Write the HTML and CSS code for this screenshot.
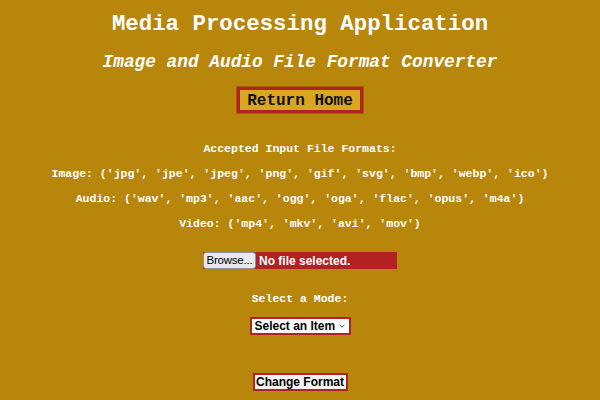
FILE: index.html
```html
<!DOCTYPE html>
<html>
<head>
<meta charset="utf-8">
<link rel="stylesheet" href="styles.css">
</head>
<body>
<main class="page">
  <h1 class="title">Media Processing Application</h1>
  <h2 class="subtitle">Image and Audio File Format Converter</h2>
  <button class="home-btn">Return Home</button>
  <section class="formats">
    <p>Accepted Input File Formats:</p>
    <p>Image: ('jpg', 'jpe', 'jpeg', 'png', 'gif', 'svg', 'bmp', 'webp', 'ico')</p>
    <p>Audio: ('wav', 'mp3', 'aac', 'ogg', 'oga', 'flac', 'opus', 'm4a')</p>
    <p>Video: ('mp4', 'mkv', 'avi', 'mov')</p>
  </section>
  <div class="file-input">
    <span class="browse">Browse...</span><span class="file-status">No file selected.</span>
  </div>
  <p class="mode-label">Select a Mode:</p>
  <div class="select">
    <span>Select an Item</span>
    <svg class="chev" width="6" height="4" viewBox="0 0 6 4"><path d="M0.5 0.8 L3 3.2 L5.5 0.8" fill="none" stroke="#444" stroke-width="1"/></svg>
  </div>
  <button class="change-btn">Change Format</button>
</main>
</body>
</html>
```
FILE: styles.css
```css
html, body {
  margin: 0;
  padding: 0;
  background: #b8860b;
}
.page {
  display: flex;
  flex-direction: column;
  align-items: center;
  font-family: "Liberation Mono", "Courier New", monospace;
  font-weight: bold;
  color: #fff;
  text-align: center;
}
.title {
  margin: 12px 0 0;
  font-size: 22.4px;
  line-height: 25px;
}
.subtitle {
  margin: 14px 0 0;
  font-size: 17.8px;
  font-style: italic;
  line-height: 22px;
}
.home-btn {
  margin-top: 14px;
  box-sizing: border-box;
  height: 26px;
  padding: 1px 7px 0;
  font-family: "Liberation Mono", "Courier New", monospace;
  font-weight: bold;
  font-size: 16px;
  line-height: 20px;
  color: #111;
  background: #daa520;
  border: 3px solid #b22222;
  box-shadow: 0 0 0 1px rgba(120, 20, 10, 0.35);
}
.formats {
  margin-top: 23px;
  font-size: 11.5px;
}
.formats p {
  margin: 0;
  line-height: 25px;
}
.file-input {
  margin-top: 16px;
  display: flex;
  align-items: center;
  width: 194px;
  height: 17px;
  background: #b22222;
  font-family: "Liberation Sans", Arial, sans-serif;
  white-space: nowrap;
}
.browse {
  box-sizing: border-box;
  width: 53px;
  height: 17px;
  background: #e9e9ed;
  border: 1px solid #8f8f9d;
  border-radius: 3px;
  color: #000;
  font-weight: normal;
  font-size: 11.5px;
  letter-spacing: -0.2px;
  line-height: 15px;
}
.file-status {
  padding-left: 3px;
  font-size: 12px;
  color: #fff;
}
.mode-label {
  margin: 22px 0 0;
  font-size: 11.5px;
  line-height: 16px;
}
.select {
  margin-top: 10px;
  box-sizing: border-box;
  width: 101px;
  height: 18px;
  display: flex;
  align-items: center;
  justify-content: space-between;
  padding: 0 4px 0 3px;
  background: #fff;
  border: 2px solid #b22222;
  color: #000;
  font-family: "Liberation Sans", Arial, sans-serif;
  font-size: 12px;
  white-space: nowrap;
}
.chev {
  flex: none;
}
.change-btn {
  margin-top: 38px;
  box-sizing: border-box;
  width: 95px;
  height: 18px;
  padding: 0;
  font-family: "Liberation Sans", Arial, sans-serif;
  font-weight: bold;
  font-size: 12px;
  line-height: 14px;
  color: #000;
  background: #f4f4f4;
  border: 2px solid #b22222;
  white-space: nowrap;
}
```
